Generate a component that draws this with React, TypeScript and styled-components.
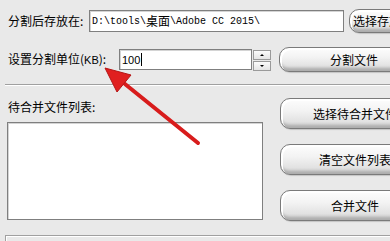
import React from "react";
import styled, { createGlobalStyle } from "styled-components";

const GlobalStyle = createGlobalStyle`
  html, body {
    margin: 0;
    padding: 0;
    background: #e9e9e9;
  }
  body {
    font-family: "Noto Sans CJK SC", "Liberation Sans", sans-serif;
    font-size: 12px;
    color: #000;
  }
`;

const Window = styled.div`
  position: relative;
  width: 390px;
  height: 241px;
  overflow: hidden;
  box-sizing: border-box;
  padding-top: 9px;
  background: #e9e9e9;
  white-space: nowrap;
`;

const Row = styled.div<{ $top?: number }>`
  display: flex;
  align-items: center;
  margin-top: ${(p) => p.$top ?? 0}px;
  padding-left: 8px;
`;

const Label = styled.span<{ $w?: number }>`
  flex: none;
  width: ${(p) => (p.$w ? `${p.$w}px` : "auto")};
  line-height: 14px;
`;

const Latin = styled.span`
  font-family: "Liberation Sans", sans-serif;
  font-size: 11px;
`;

const Field = styled.div<{ $w: number; $h: number; $sans?: boolean }>`
  flex: none;
  display: flex;
  align-items: center;
  box-sizing: border-box;
  width: ${(p) => p.$w}px;
  height: ${(p) => p.$h}px;
  padding-left: 2px;
  background: #fff;
  border: 1px solid #7f7f7f;
  box-shadow: inset 1px 1px 0 #d4d4d4;
  font-family: ${(p) =>
    p.$sans
      ? `"Liberation Sans", sans-serif`
      : `"Liberation Mono", "Noto Sans CJK SC", monospace`};
  font-size: ${(p) => (p.$sans ? 11 : 10)}px;
`;

const Cjk = styled.span`
  font-family: "Noto Sans CJK SC", sans-serif;
  font-size: 12px;
  line-height: 14px;
`;

const Caret = styled.span`
  display: inline-block;
  width: 1px;
  height: 13px;
  margin-left: 1px;
  background: #000;
`;

const Spinner = styled.div`
  flex: none;
  display: flex;
  flex-direction: column;
  gap: 1px;
  width: 18px;
  height: 21px;
  margin-left: 1px;
  margin-top: 1px;
`;

const SpinHalf = styled.div<{ $up?: boolean }>`
  flex: 1;
  display: flex;
  align-items: center;
  justify-content: center;
  box-sizing: border-box;
  background: linear-gradient(#fbfbfb, #e4e4e4);
  border: 1px solid #9a9a9a;

  &::after {
    content: "";
    border-left: 2px solid transparent;
    border-right: 2px solid transparent;
    ${(p) =>
      p.$up ? "border-bottom: 2px solid #000;" : "border-top: 2px solid #000;"}
  }
`;

const Button = styled.div<{ $w: number; $h: number; $left?: number }>`
  flex: none;
  display: flex;
  align-items: center;
  justify-content: center;
  box-sizing: border-box;
  width: ${(p) => p.$w}px;
  height: ${(p) => p.$h}px;
  margin-left: ${(p) => p.$left ?? 0}px;
  border: 1px solid #7a7a7a;
  border-radius: 10px;
  background: linear-gradient(
    to bottom,
    #fdfdfd 0%,
    #f3f3f3 40%,
    #e2e2e2 78%,
    #cbcbcb 100%
  );
  box-shadow: inset 2px 2px 0 #fff, inset -1px -3px 3px #adadad,
    1px 1px 1px #c4c4c4;
  line-height: 14px;
`;

const Separator = styled.div`
  margin: 12px 0 0 5px;
  height: 0;
  border-top: 1px solid #a0a0a0;
  border-bottom: 1px solid #fff;
`;

const Lower = styled.div`
  display: flex;
  margin-top: 12px;
  padding-left: 7px;
`;

const ListColumn = styled.div`
  display: flex;
  flex-direction: column;
  padding-top: 2px;
`;

const ListLabel = styled.span`
  margin-left: 1px;
  line-height: 14px;
`;

const ListBox = styled.div`
  box-sizing: border-box;
  width: 256px;
  height: 98px;
  margin-top: 8px;
  background: #fff;
  border: 1px solid #7f7f7f;
  box-shadow: inset 1px 1px 0 #d4d4d4;
`;

const ButtonColumn = styled.div`
  display: flex;
  flex-direction: column;
  gap: 15px;
  margin-left: 17px;
`;

const BottomFrame = styled.div`
  margin: 14px 0 0 5px;
  height: 10px;
  border-top: 1px solid #a0a0a0;
  border-left: 1px solid #a0a0a0;
  box-shadow: inset 1px 1px 0 #fff;
`;

const Arrow = styled.svg`
  position: absolute;
  left: 0;
  top: 0;
  pointer-events: none;
`;

export default function App() {
  return (
    <>
      <GlobalStyle />
      <Window>
        <Row>
          <Label $w={81}>分割后存放在:</Label>
          <Field $w={255} $h={22}>
            D:\tools\<Cjk>桌面</Cjk>\Adobe CC 2015\
          </Field>
          <Button $w={80} $h={24} $left={5}>
            选择存放位置
          </Button>
        </Row>

        <Row $top={14}>
          <Label $w={111}>
            设置分割单位(<Latin>KB</Latin>):
          </Label>
          <Field $w={133} $h={21} $sans>
            100
            <Caret />
          </Field>
          <Spinner>
            <SpinHalf $up />
            <SpinHalf />
          </Spinner>
          <Button $w={150} $h={25} $left={8}>
            分割文件
          </Button>
        </Row>

        <Separator />

        <Lower>
          <ListColumn>
            <ListLabel>待合并文件列表:</ListLabel>
            <ListBox />
          </ListColumn>
          <ButtonColumn>
            <Button $w={150} $h={31}>
              选择待合并文件
            </Button>
            <Button $w={150} $h={31}>
              清空文件列表
            </Button>
            <Button $w={150} $h={31}>
              合并文件
            </Button>
          </ButtonColumn>
        </Lower>

        <BottomFrame />

        <Arrow width="390" height="241" viewBox="0 0 390 241">
          <line
            x1="198"
            y1="143"
            x2="120"
            y2="80"
            stroke="#d81c1c"
            strokeWidth="4"
            strokeLinecap="round"
          />
          <polygon
            points="105,68 131,75 117,92"
            fill="#e01f1f"
            stroke="#b51515"
            strokeWidth="1"
            strokeLinejoin="round"
          />
        </Arrow>
      </Window>
    </>
  );
}
